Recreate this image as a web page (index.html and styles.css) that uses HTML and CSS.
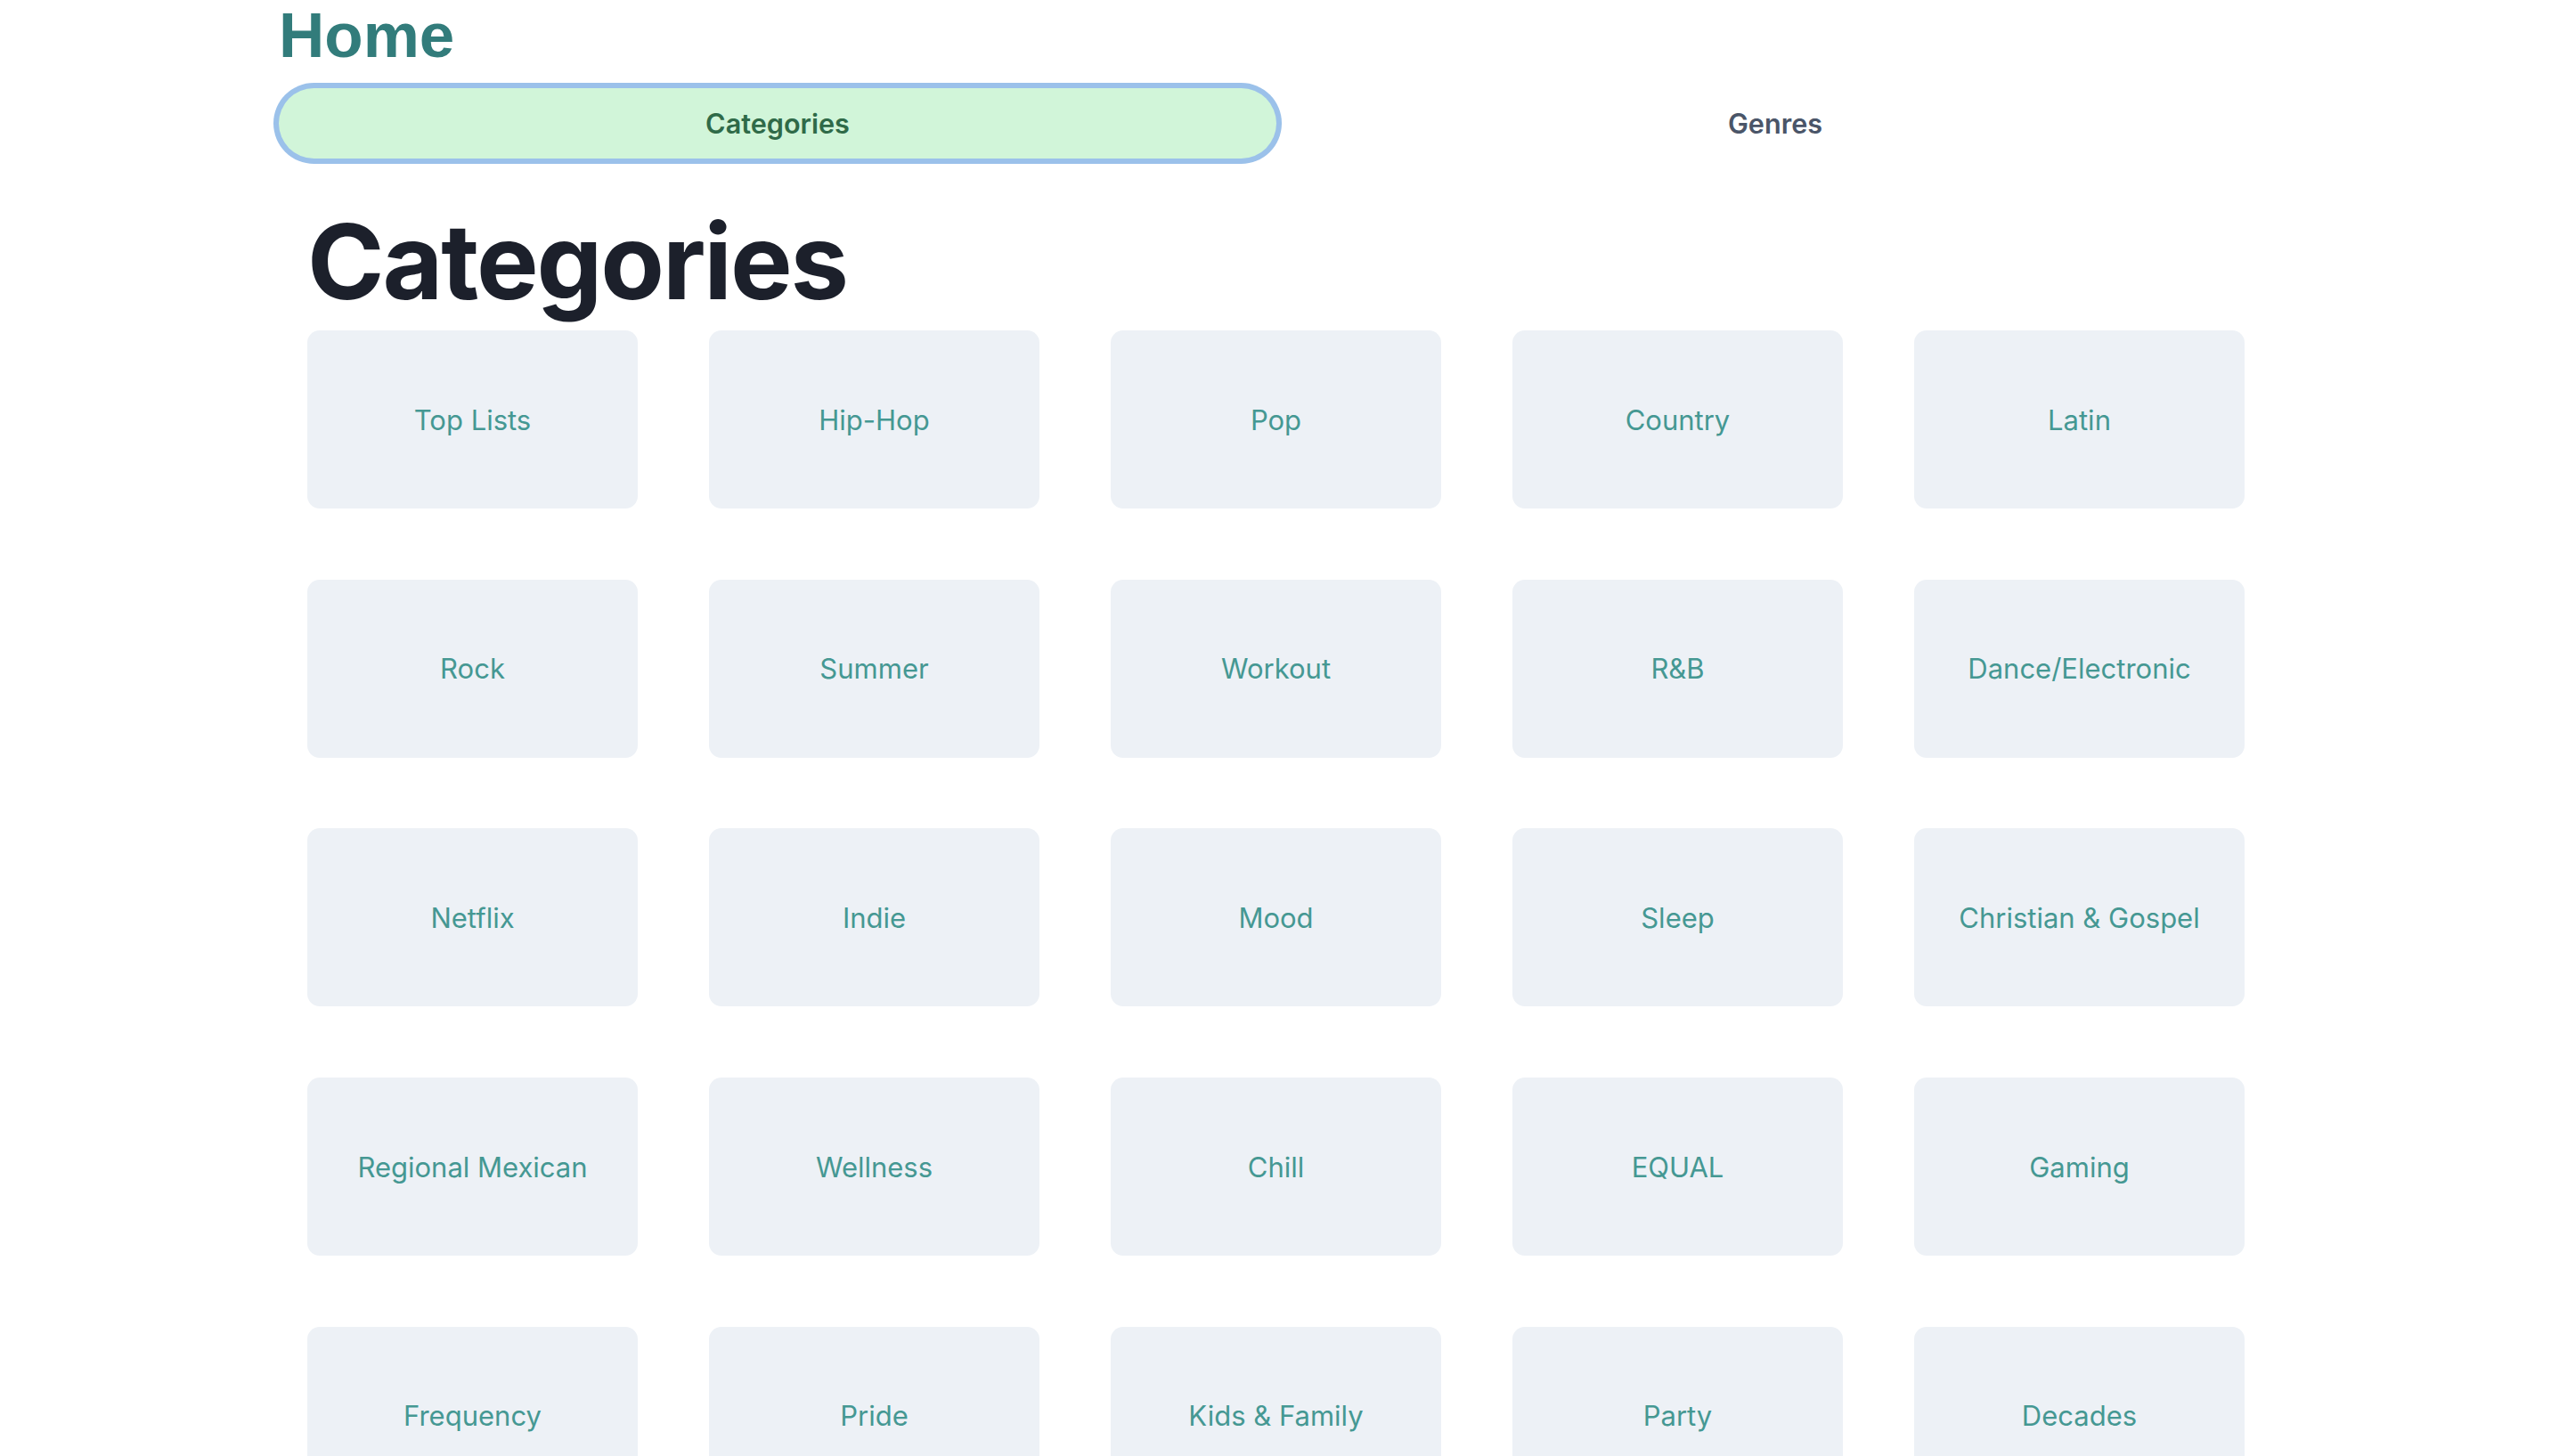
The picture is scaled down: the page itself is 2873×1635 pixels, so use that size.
FILE: index.html
```html
<!DOCTYPE html>
<html lang="en">
<head>
<meta charset="utf-8">
<title>Home</title>
<link rel="stylesheet" href="styles.css">
</head>
<body>
<div class="page">
  <h1 class="home">Home</h1>
  <div class="tabs">
    <div class="tablist">
      <button class="tab tab-active">Categories</button>
      <button class="tab">Genres</button>
    </div>
    <div class="panel">
      <h2 class="panel-title">Categories</h2>
      <div class="grid">
        <div class="card">Top Lists</div>
        <div class="card">Hip-Hop</div>
        <div class="card">Pop</div>
        <div class="card">Country</div>
        <div class="card">Latin</div>
        <div class="card">Rock</div>
        <div class="card">Summer</div>
        <div class="card">Workout</div>
        <div class="card">R&amp;B</div>
        <div class="card">Dance/Electronic</div>
        <div class="card">Netflix</div>
        <div class="card">Indie</div>
        <div class="card">Mood</div>
        <div class="card">Sleep</div>
        <div class="card">Christian &amp; Gospel</div>
        <div class="card">Regional Mexican</div>
        <div class="card">Wellness</div>
        <div class="card">Chill</div>
        <div class="card">EQUAL</div>
        <div class="card">Gaming</div>
        <div class="card">Frequency</div>
        <div class="card">Pride</div>
        <div class="card">Kids &amp; Family</div>
        <div class="card">Party</div>
        <div class="card">Decades</div>
      </div>
    </div>
  </div>
</div>
</body>
</html>
```

FILE: styles.css
```css
html, body {
  margin: 0;
  padding: 0;
  background: #ffffff;
}

body {
  font-family: Inter, "Noto Sans", sans-serif;
  overflow: hidden;
}

.page {
  padding-left: 313px;
  width: 2240px;
}

.home {
  margin: 0;
  font-family: "Liberation Sans", Arial, sans-serif;
  font-weight: 700;
  font-size: 71px;
  line-height: 80px;
  color: #327c7b;
}

.tabs {
  margin-top: 19px;
}

.tablist {
  display: flex;
}

.tab {
  flex: 1 1 0;
  height: 79px;
  border: none;
  background: transparent;
  border-radius: 9999px;
  font-family: Inter, "Noto Sans", sans-serif;
  font-weight: 600;
  font-size: 30.6px;
  color: #4a5568;
  padding: 0;
  cursor: pointer;
}

.tab-active {
  background: #d1f5d9;
  color: #2f6a48;
  box-shadow: 0 0 0 6px #9bc1ea;
}

.panel {
  padding: 32px;
}

.panel-title {
  margin: 25px 0 0 0;
  font-family: Inter, "Noto Sans", sans-serif;
  font-weight: 700;
  font-size: 117px;
  line-height: 117px;
  color: #1c202b;
  letter-spacing: -2.1px;
}

.grid {
  margin-top: 19px;
  display: grid;
  grid-template-columns: repeat(5, 371px);
  grid-auto-rows: 200px;
  column-gap: 80px;
  row-gap: 79.7px;
}

.card {
  background: #edf1f6;
  border-radius: 14px;
  display: flex;
  align-items: center;
  justify-content: center;
  font-size: 31px;
  color: #459893;
}
```
